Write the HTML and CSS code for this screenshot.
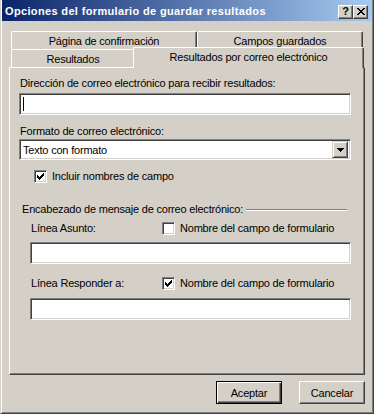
FILE: index.html
```html
<!DOCTYPE html>
<html lang="es">
<head>
    <meta charset="UTF-8">
    <meta name="viewport" content="width=device-width, initial-scale=1.0">
    <title>Opciones del formulario de guardar resultados</title>
    <link rel="stylesheet" href="styles.css">
</head>
<body>
    <div class="window">
        <div class="titlebar">
            <span class="title">Opciones del formulario de guardar resultados</span>
            <div class="caption-buttons">
                <button class="caption-btn help">?</button>
                <button class="caption-btn close">
                    <svg width="8" height="7" viewBox="0 0 8 7" shape-rendering="crispEdges">
                        <path d="M0 0h2v1H0z M6 0h2v1H6z M1 1h2v1H1z M5 1h2v1H5z M2 2h4v1H2z M3 3h2v1H3z M2 4h4v1H2z M1 5h2v1H1z M5 5h2v1H5z M0 6h2v1H0z M6 6h2v1H6z" fill="#000"/>
                    </svg>
                </button>
            </div>
        </div>

        <div class="dialog">
            <!-- pestañas en dos filas -->
            <div class="tabs">
                <div class="tab-row">
                    <div class="tab tab-confirm">Página de confirmación</div>
                    <div class="tab tab-campos">Campos guardados</div>
                </div>
                <div class="tab-row">
                    <div class="tab tab-res">Resultados</div>
                    <div class="tab tab-active">Resultados por correo electrónico</div>
                </div>
            </div>

            <div class="panel">
                <div class="label">Dirección de correo electrónico para recibir resultados:</div>
                <div class="field field-wide"><span class="caret"></span></div>

                <div class="label label-format">Formato de correo electrónico:</div>
                <div class="select">
                    <span class="select-text">Texto con formato</span>
                    <span class="select-btn">
                        <svg width="7" height="4" viewBox="0 0 7 4" shape-rendering="crispEdges">
                            <path d="M0 0h7v1H0z M1 1h5v1H1z M2 2h3v1H2z M3 3h1v1H3z" fill="#000"/>
                        </svg>
                    </span>
                </div>

                <div class="check-row check-include">
                    <span class="checkbox">
                        <svg width="9" height="9" viewBox="2 2 9 9" shape-rendering="crispEdges">
                            <path d="M3 5h1v3H3z M4 6h1v3H4z M5 7h1v3H5z M6 6h1v3H6z M7 5h1v3H7z M8 4h1v3H8z M9 3h1v3H9z" fill="#000"/>
                        </svg>
                    </span>
                    <span>Incluir nombres de campo</span>
                </div>

                <div class="group-title">
                    <span>Encabezado de mensaje de correo electrónico:</span>
                    <span class="group-line"></span>
                </div>

                <div class="line-row row-subject">
                    <span>Línea Asunto:</span>
                    <div class="check-row">
                        <span class="checkbox"></span>
                        <span>Nombre del campo de formulario</span>
                    </div>
                </div>
                <div class="field field-indent field-subject"></div>

                <div class="line-row row-reply">
                    <span>Línea Responder a:</span>
                    <div class="check-row">
                        <span class="checkbox">
                            <svg width="9" height="9" viewBox="2 2 9 9" shape-rendering="crispEdges">
                                <path d="M3 5h1v3H3z M4 6h1v3H4z M5 7h1v3H5z M6 6h1v3H6z M7 5h1v3H7z M8 4h1v3H8z M9 3h1v3H9z" fill="#000"/>
                            </svg>
                        </span>
                        <span>Nombre del campo de formulario</span>
                    </div>
                </div>
                <div class="field field-indent field-reply"></div>
            </div>

            <div class="buttons">
                <button class="btn btn-default">Aceptar</button>
                <button class="btn">Cancelar</button>
            </div>
        </div>
    </div>
</body>
</html>
```

FILE: styles.css
```css
body {
    margin: 0;
    padding: 0;
    background-color: #d4d0c8;
    font-family: "Liberation Sans", Arial, sans-serif;
    font-size: 11px;
    letter-spacing: -0.2px;
    color: #000;
}
.window {
    width: 374px;
    height: 414px;
    box-sizing: border-box;
    background-color: #d4d0c8;
    border: 1px solid;
    border-top: 0;
    border-color: #d4d0c8 #404040 #404040 #d4d0c8;
    box-shadow: inset 1px 0 #fff, inset -1px -1px #808080;
    padding: 0 1px;
}
.titlebar {
    height: 21px;
    display: flex;
    align-items: center;
    justify-content: space-between;
    padding: 0 4px 0 3px;
    background: linear-gradient(to right, #0a246a, #a6caf0);
}
.title {
    color: #fff;
    font-weight: bold;
    font-size: 11px;
    letter-spacing: 0.35px;
    white-space: nowrap;
}
.caption-buttons {
    display: flex;
    margin-top: 2px;
}
.caption-btn {
    width: 15px;
    height: 14px;
    box-sizing: border-box;
    margin: 0;
    padding: 0;
    background-color: #d4d0c8;
    border: 1px solid;
    border-color: #fff #404040 #404040 #fff;
    box-shadow: inset -1px -1px #808080;
    display: flex;
    align-items: center;
    justify-content: center;
    font-family: "Liberation Sans", Arial, sans-serif;
    font-weight: bold;
    font-size: 11px;
    line-height: 1;
    color: #000;
}
.dialog {
    padding: 0 7px;
}
.tabs {
    padding: 10px 0 0 2px;
}
.tab-row {
    display: flex;
    height: 18px;
}
.tab {
    height: 18px;
    box-sizing: border-box;
    display: flex;
    align-items: center;
    justify-content: center;
    background-color: #d4d0c8;
    border-top: 1px solid #fff;
    border-left: 1px solid #fff;
    border-right: 1px solid #404040;
    box-shadow: inset -1px 0 #808080;
    border-radius: 2px 2px 0 0;
    white-space: nowrap;
}
.tab-confirm {
    width: 186px;
}
.tab-campos {
    width: 166px;
}
.tab-res {
    width: 124px;
}
.tab-active {
    width: 231px;
    height: 21px;
    margin: -2px 0 -1px -2px;
    padding-bottom: 2px;
    position: relative;
    z-index: 1;
}
.panel {
    height: 308px;
    box-sizing: border-box;
    border: 1px solid;
    border-color: #fff #404040 #404040 #fff;
    box-shadow: inset -1px -1px #808080;
    padding: 9px 0 0 9px;
}
.label {
    height: 13px;
    line-height: 13px;
    padding-left: 1px;
}
.label-format {
    margin-top: 10px;
}
.field {
    height: 22px;
    box-sizing: border-box;
    background-color: #fff;
    border: 1px solid;
    border-color: #808080 #fff #fff #808080;
    box-shadow: inset 1px 1px #404040, inset -1px -1px #d4d0c8;
}
.field-wide {
    width: 332px;
    margin-top: 3px;
    padding: 3px 0 0 3px;
}
.caret {
    display: block;
    width: 1px;
    height: 14px;
    background-color: #000;
}
.field-indent {
    width: 321px;
    margin-left: 11px;
}
.field-subject {
    margin-top: 7px;
}
.field-reply {
    margin-top: 8px;
}
.select {
    width: 332px;
    height: 21px;
    box-sizing: border-box;
    margin-top: 1px;
    display: flex;
    align-items: center;
    justify-content: space-between;
    background-color: #fff;
    border: 1px solid;
    border-color: #808080 #fff #fff #808080;
    box-shadow: inset 1px 1px #404040, inset -1px -1px #d4d0c8;
    padding: 1px 2px 1px 1px;
}
.select-text {
    padding-left: 2px;
}
.select-btn {
    width: 16px;
    height: 17px;
    box-sizing: border-box;
    display: flex;
    align-items: center;
    justify-content: center;
    background-color: #d4d0c8;
    border: 1px solid;
    border-color: #d4d0c8 #404040 #404040 #d4d0c8;
    box-shadow: inset 1px 1px #fff, inset -1px -1px #808080;
}
.check-row {
    display: flex;
    align-items: center;
    gap: 5px;
    height: 13px;
    line-height: 13px;
}
.check-include {
    margin-top: 10px;
    padding-left: 15px;
}
.checkbox {
    width: 13px;
    height: 13px;
    box-sizing: border-box;
    display: flex;
    align-items: center;
    justify-content: center;
    background-color: #fff;
    border: 1px solid;
    border-color: #808080 #fff #fff #808080;
    box-shadow: inset 1px 1px #404040, inset -1px -1px #d4d0c8;
}
.group-title {
    width: 325px;
    margin-top: 20px;
    padding-left: 3px;
    display: flex;
    align-items: center;
    gap: 3px;
    height: 13px;
    line-height: 13px;
    white-space: nowrap;
}
.group-line {
    flex: 1;
    border-top: 1px solid #808080;
    border-bottom: 1px solid #fff;
}
.line-row {
    display: grid;
    grid-template-columns: 131px auto;
    padding-left: 12px;
    height: 13px;
    line-height: 13px;
}
.row-subject {
    margin-top: 6px;
}
.row-reply {
    margin-top: 13px;
}
.buttons {
    display: flex;
    justify-content: flex-end;
    gap: 17px;
    margin-top: 6px;
}
.btn {
    width: 66px;
    height: 23px;
    box-sizing: border-box;
    margin: 0;
    padding: 0;
    background-color: #d4d0c8;
    border: 1px solid;
    border-color: #fff #404040 #404040 #fff;
    box-shadow: inset -1px -1px #808080;
    font-family: "Liberation Sans", Arial, sans-serif;
    font-size: 11px;
    letter-spacing: -0.2px;
    color: #000;
}
.btn-default {
    border-color: #000;
    box-shadow: inset 1px 1px #fff, inset -1px -1px #404040, inset -2px -2px #808080;
}
```
